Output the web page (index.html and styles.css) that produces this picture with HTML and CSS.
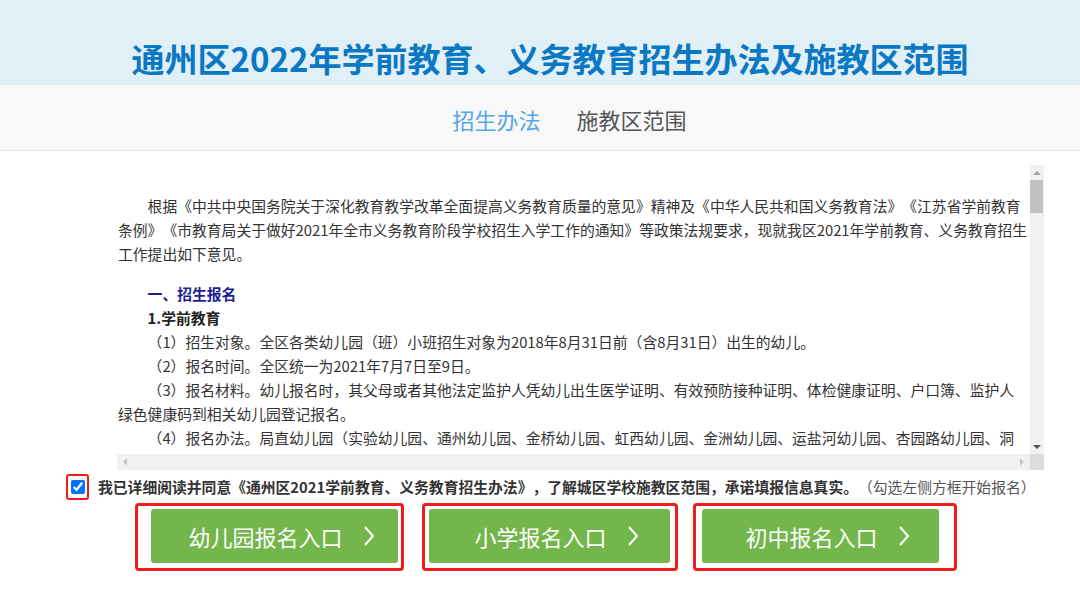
FILE: index.html
```html
<!DOCTYPE html>
<html lang="zh-CN">
<head>
  <meta charset="UTF-8">
  <title>通州区2022年学前教育、义务教育招生办法及施教区范围</title>
  <link rel="stylesheet" href="styles.css">
</head>
<body>

<header class="banner">
  <h1>通州区2022年学前教育、义务教育招生办法及施教区范围</h1>
</header>

<nav class="tabs">
  <a class="tab active" href="#">招生办法</a>
  <a class="tab" href="#">施教区范围</a>
</nav>

<main class="main">
  <!-- policy text in a scroll box -->
  <div class="reader">
    <div class="view">
      <div class="doc">
        <p class="lead">根据《中共中央国务院关于深化教育教学改革全面提高义务教育质量的意见》精神及《中华人民共和国义务教育法》《江苏省学前教育<br>条例》《市教育局关于做好2021年全市义务教育阶段学校招生入学工作的通知》等政策法规要求，现就我区2021年学前教育、义务教育招生<br>工作提出如下意见。</p>
        <h3>一、招生报名</h3>
        <h4>1.学前教育</h4>
        <p>（1）招生对象。全区各类幼儿园（班）小班招生对象为2018年8月31日前（含8月31日）出生的幼儿。</p>
        <p>（2）报名时间。全区统一为2021年7月7日至9日。</p>
        <p>（3）报名材料。幼儿报名时，其父母或者其他法定监护人凭幼儿出生医学证明、有效预防接种证明、体检健康证明、户口簿、监护人<br>绿色健康码到相关幼儿园登记报名。</p>
        <p>（4）报名办法。局直幼儿园（实验幼儿园、通州幼儿园、金桥幼儿园、虹西幼儿园、金洲幼儿园、运盐河幼儿园、杏园路幼儿园、洞</p>
      </div>
    </div>
    <div class="vbar">
      <span class="arrow up"></span>
      <span class="thumb"></span>
      <span class="track"></span>
      <span class="arrow down"></span>
    </div>
    <div class="hbar">
      <span class="arrow left"></span>
      <span class="track"></span>
      <span class="arrow right"></span>
    </div>
    <div class="corner"></div>
  </div>

  <div class="agree">
    <span class="mark"><input type="checkbox" id="agreeBox" checked></span>
    <label for="agreeBox">我已详细阅读并同意《通州区2021学前教育、义务教育招生办法》，了解城区学校施教区范围，承诺填报信息真实。<span class="hint">（勾选左侧方框开始报名）</span></label>
  </div>

  <div class="entries">
    <div class="frame frame-1">
      <a class="btn btn-1" href="#">幼儿园报名入口
        <svg width="12" height="22" viewBox="0 0 12 22"><path d="M2 2 L10 11 L2 20" fill="none" stroke="#fff" stroke-width="2"/></svg>
      </a>
    </div>
    <div class="frame frame-2">
      <a class="btn btn-2" href="#">小学报名入口
        <svg width="12" height="22" viewBox="0 0 12 22"><path d="M2 2 L10 11 L2 20" fill="none" stroke="#fff" stroke-width="2"/></svg>
      </a>
    </div>
    <div class="frame frame-3">
      <a class="btn btn-3" href="#">初中报名入口
        <svg width="12" height="22" viewBox="0 0 12 22"><path d="M2 2 L10 11 L2 20" fill="none" stroke="#fff" stroke-width="2"/></svg>
      </a>
    </div>
  </div>
</main>

</body>
</html>
```

FILE: styles.css
```css
body {
  margin: 0;
  font-family: "Noto Sans CJK SC", "Microsoft YaHei", sans-serif;
  color: #333;
  background: #fff;
  text-spacing-trim: space-all;
}
.banner {
  height: 85px;
  box-sizing: border-box;
  padding: 38px 0 0 20px;
  background: #e1eff7;
}
.banner h1 {
  margin: 0;
  text-align: center;
  font-size: 33px;
  line-height: 40px;
  font-weight: 700;
  color: #0b78c4;
}
.tabs {
  height: 62px;
  padding: 3px 0 0 59px;
  display: flex;
  justify-content: center;
  align-items: center;
  gap: 36px;
  background: #f8f8f8;
  border-bottom: 1px solid #e8e8e8;
}
.tab {
  font-size: 22px;
  color: #555;
  text-decoration: none;
}
.tab.active {
  color: #55a6ea;
}
.main {
  padding-top: 14px;
}

/* scroll box */
.reader {
  width: 927px;
  margin-left: 117px;
  display: grid;
  grid-template-columns: 913px 14px;
  grid-template-rows: 289px 16px;
}
.view {
  overflow: hidden;
  box-sizing: border-box;
  padding: 29px 0 0 1px;
}
.doc {
  width: 912px;
  font-size: 14.8px;
  line-height: 24px;
  white-space: nowrap;
}
.doc p {
  margin: 0;
  text-indent: 2em;
}
.doc .lead {
  margin-bottom: 16px;
}
.doc h3,
.doc h4 {
  margin: 0;
  font-size: 14.8px;
  line-height: 24px;
  font-weight: 700;
  text-indent: 2em;
}
.doc h3 {
  color: #1d1d9b;
}
.doc h4 {
  color: #222;
}
.vbar {
  display: flex;
  flex-direction: column;
  background: #f1f1f1;
}
.vbar .thumb {
  height: 33px;
  margin-right: 1px;
  background: #c1c1c1;
}
.track {
  flex: 1;
}
.arrow {
  display: flex;
  align-items: center;
  justify-content: center;
}
.vbar .arrow {
  height: 15px;
}
.hbar .arrow {
  width: 16px;
}
.arrow::before {
  content: "";
  width: 0;
  height: 0;
  border: 4px solid transparent;
}
.arrow.up::before {
  border-top-width: 0;
  border-bottom-color: #a3a3a3;
}
.arrow.down::before {
  border-bottom-width: 0;
  border-top-color: #505050;
}
.arrow.left::before {
  border-left-width: 0;
  border-right-color: #c4c4c4;
}
.arrow.right::before {
  border-right-width: 0;
  border-left-color: #c4c4c4;
}
.hbar {
  display: flex;
  background: #f1f1f1;
}
.corner {
  background: #dcdcdc;
}

/* agreement line */
.agree {
  display: flex;
  align-items: center;
  margin-top: 4px;
  padding-left: 66px;
  font-size: 14.8px;
  white-space: nowrap;
}
.mark {
  display: flex;
  padding: 4px 2px 4px 3px;
  border: 2px solid #f21b1b;
  border-radius: 3px;
}
.mark input {
  margin: 0;
  width: 14px;
  height: 14px;
}
.agree label {
  margin-left: 9px;
  line-height: 26px;
  font-weight: 700;
  color: #333;
}
.hint {
  font-weight: 400;
  color: #555;
}

/* entry buttons */
.entries {
  display: flex;
  margin-top: 3px;
}
.frame {
  display: flex;
  border: 3px solid #f21b1b;
  border-radius: 4px;
}
.frame-1 {
  margin-left: 135px;
  padding: 3px 3px 5px 13px;
}
.frame-2 {
  margin-left: 18px;
  padding: 3px 5px 5px 4px;
}
.frame-3 {
  margin-left: 15px;
  padding: 3px 15px 5px 6px;
}
.btn {
  height: 54px;
  box-sizing: border-box;
  padding-left: 14px;
  display: flex;
  align-items: center;
  justify-content: center;
  gap: 20px;
  background: #73b64b;
  color: #fff;
  border-radius: 3px;
  font-size: 22px;
  text-decoration: none;
}
.btn-1 {
  width: 247px;
}
.btn-2 {
  width: 241px;
}
.btn-3 {
  width: 237px;
}
```
